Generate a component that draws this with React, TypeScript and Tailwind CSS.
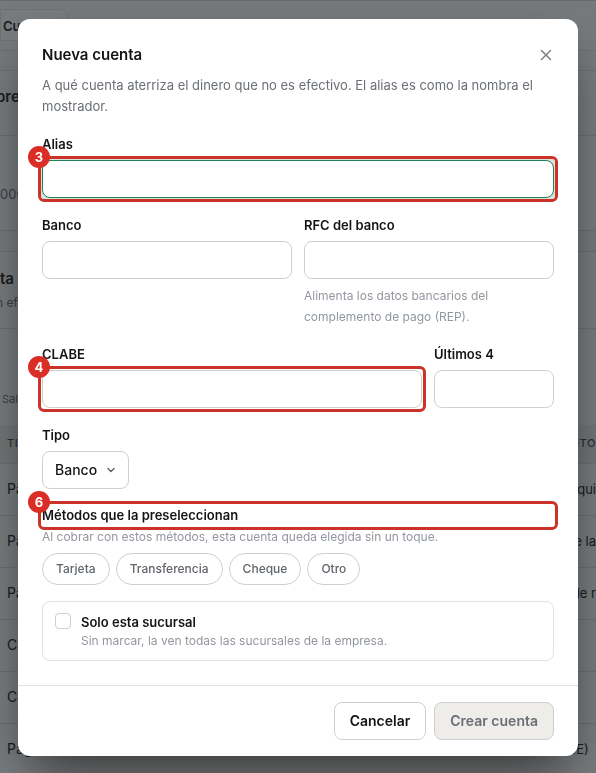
import { useState } from 'react';
import type { ReactNode } from 'react';
import { ChevronDown, X } from 'lucide-react';

const METHODS = ['Tarjeta', 'Transferencia', 'Cheque', 'Otro'];

const MOVEMENTS = [
    { type: 'Pago de venta', note: 'aqui' },
    { type: 'Pago de venta', note: 'de la' },
    { type: 'Pago de venta', note: 'de r' },
    { type: 'Compra', note: '' },
    { type: 'Compra', note: '' },
    { type: 'Pago', note: '(CLABE)\u00a0\u00a0' },
];

const inputClass = 'block h-[38px] w-full rounded-lg border border-[#cfcfcf] bg-white px-3 text-sm outline-none';

function Callout({ n, children }: { n: number; children: ReactNode }) {
    return (
        <div className="relative">
            {children}
            <div className="pointer-events-none absolute -inset-1 rounded-md border-3 border-[#cb3328]" />
            <span className="pointer-events-none absolute -top-[14px] -left-[14px] flex size-[22px] items-center justify-center rounded-full bg-[#d92d25] pt-px text-[13px] font-bold text-white">
                {n}
            </span>
        </div>
    );
}

function Label({ htmlFor, children }: { htmlFor: string; children: ReactNode }) {
    return (
        <label htmlFor={htmlFor} className="block pb-2 text-[13px] leading-4 font-semibold">
            {children}
        </label>
    );
}

function AccountsPage() {
    return (
        <div className="h-screen overflow-hidden text-[#26292c]" aria-hidden="true">
            <div className="h-[50px] border-t border-[#d5d5d5] pt-2">
                <div className="h-8 w-[68px] rounded-r-lg border border-[#e0e4e0] bg-[#fafaf8] pl-[2px] text-[13px] leading-8 font-semibold">Cuentas</div>
            </div>
            <div className="h-[21px] border-y border-[#dedede]" />
            <div className="h-[65px] border-b border-[#dedede] bg-[#fafaf8] pt-4">
                <h2 className="-ml-1 text-[15px] leading-5 font-semibold">presa</h2>
            </div>
            <div className="h-[95px] border-b border-[#dedede] bg-[#fafaf8] pt-12 text-[13px] leading-5 text-gray-500">0009</div>
            <div className="h-[21px] border-b border-[#dedede]" />
            <div className="h-[77px] border-b border-[#dedede] bg-[#fafaf8] pt-[17px]">
                <h2 className="text-[15px] leading-5 font-semibold">ta</h2>
                <p className="-ml-1 pt-1 text-xs leading-5 text-gray-500">n efectivo</p>
            </div>
            <div className="h-[96px] bg-[#fafaf8] pt-[62px] pl-[2px] text-[11px] leading-4 text-gray-500">Saldo</div>
            <table className="w-full table-fixed bg-[#fafaf8] text-sm">
                <thead>
                    <tr className="h-[38px] border-b border-[#dedede] bg-[#ecece8] text-left text-[11px] tracking-wider text-gray-600">
                        <th className="w-1/2 pl-[7px] font-medium">TIPO</th>
                        <th className="text-right font-medium">MONTO</th>
                    </tr>
                </thead>
                <tbody>
                    {MOVEMENTS.map((m, i) => (
                        <tr key={i} className="h-[52px] border-b border-[#dedede]">
                            <td className="pl-[7px]">{m.type}</td>
                            <td className="text-right text-[13px]">{m.note}</td>
                        </tr>
                    ))}
                </tbody>
            </table>
        </div>
    );
}

export default function App() {
    const [selected, setSelected] = useState<string[]>([]);

    const toggleMethod = (name: string) => {
        setSelected(selected.includes(name) ? selected.filter(s => s !== name) : [...selected, name]);
    };

    return (
        <div className="bg-[#f6f6f3] font-[Inter,sans-serif]">
            <AccountsPage />

            <div className="fixed inset-0 flex items-center justify-center bg-[#0f1419]/55 px-[18px] pt-[19px] pb-[17px]">
                <div role="dialog" aria-labelledby="title" className="w-full max-w-[560px] rounded-xl bg-white text-[#141414] shadow-2xl shadow-black/60">
                    <div className="px-6 pt-6 pb-4">
                        <div className="flex items-center justify-between">
                            <h1 id="title" className="text-[15px] leading-6 font-semibold">Nueva cuenta</h1>
                            <button aria-label="Cerrar" className="flex size-4 items-center justify-center text-[#7c7f83]">
                                <X className="size-[18px] shrink-0" strokeWidth={2} />
                            </button>
                        </div>
                        <p className="pt-2 text-[13px] leading-[21px] text-[#6a6f76]">
                            A qué cuenta aterriza el dinero que no es efectivo. El alias es como la nombra el mostrador.
                        </p>
                    </div>

                    <form className="px-6 pt-[3px] pb-6">
                        <Label htmlFor="alias">Alias</Label>
                        <Callout n={3}>
                            <input id="alias" className="block h-[38px] w-full rounded-lg border border-[#23805a] bg-white px-3 text-sm ring-3 ring-[#d5e5d9] outline-none" />
                        </Callout>

                        <div className="grid grid-cols-2 gap-3 pt-[19px]">
                            <div>
                                <Label htmlFor="banco">Banco</Label>
                                <input id="banco" className={inputClass} />
                            </div>
                            <div>
                                <Label htmlFor="rfc">RFC del banco</Label>
                                <input id="rfc" className={inputClass} />
                                <p className="pt-[6px] text-xs leading-[21px] text-[#92979f]">Alimenta los datos bancarios del complemento de pago (REP).</p>
                            </div>
                        </div>

                        <div className="flex gap-3 pt-[19px]">
                            <div className="flex-1">
                                <Label htmlFor="clabe">CLABE</Label>
                                <Callout n={4}>
                                    <input id="clabe" className={inputClass} />
                                </Callout>
                            </div>
                            <div className="w-[120px]">
                                <Label htmlFor="ultimos">Últimos 4</Label>
                                <input id="ultimos" className={inputClass} />
                            </div>
                        </div>

                        <div className="pt-[19px]">
                            <Label htmlFor="tipo">Tipo</Label>
                            <div className="relative w-fit">
                                <select id="tipo" className="block h-[38px] appearance-none rounded-lg border border-[#cfcfcf] bg-white pr-[30px] pl-3 text-sm font-medium outline-none">
                                    <option>Banco</option>
                                </select>
                                <ChevronDown className="pointer-events-none absolute top-[13px] right-3 size-3 text-[#55595e]" strokeWidth={2.5} />
                            </div>
                        </div>

                        <fieldset className="pt-4" aria-labelledby="metodos">
                            <Callout n={6}>
                                <div id="metodos" className="text-[13px] leading-[21px] font-semibold">Métodos que la preseleccionan</div>
                            </Callout>
                            <p className="text-xs leading-[21px] text-[#92979f]">Al cobrar con estos métodos, esta cuenta queda elegida sin un toque.</p>
                            <div className="flex flex-wrap gap-[6px] pt-[6px]">
                                {METHODS.map(name => (
                                    <button
                                        key={name}
                                        type="button"
                                        aria-pressed={selected.includes(name)}
                                        onClick={() => toggleMethod(name)}
                                        className="h-8 rounded-full border border-[#cfcfcf] px-[13px] text-xs font-medium text-[#60656b] aria-pressed:bg-gray-100"
                                    >
                                        {name}
                                    </button>
                                ))}
                            </div>
                        </fieldset>

                        <label htmlFor="sucursal" className="mt-4 flex gap-[10px] rounded-lg border border-[#e2e2e2] px-3 pt-[11px] pb-[9px]">
                            <input id="sucursal" type="checkbox" className="size-4 appearance-none rounded-sm border border-[#cfcfcf] bg-white checked:bg-[#23805a]" />
                            <span>
                                <span className="block text-[13px] leading-[18px] font-semibold">Solo esta sucursal</span>
                                <span className="block text-xs leading-5 text-[#92979f]">Sin marcar, la ven todas las sucursales de la empresa.</span>
                            </span>
                        </label>
                    </form>

                    <div className="flex justify-end gap-2 border-t border-[#e2e2e2] px-6 py-4">
                        <button className="h-[38px] rounded-lg border border-[#cfcfcf] px-[15px] text-sm font-semibold">Cancelar</button>
                        <button className="h-[38px] rounded-lg border border-[#cfcfcf] bg-[#eeede9] px-[15px] text-sm font-semibold text-[#6a6f76]">Crear cuenta</button>
                    </div>
                </div>
            </div>
        </div>
    );
}
